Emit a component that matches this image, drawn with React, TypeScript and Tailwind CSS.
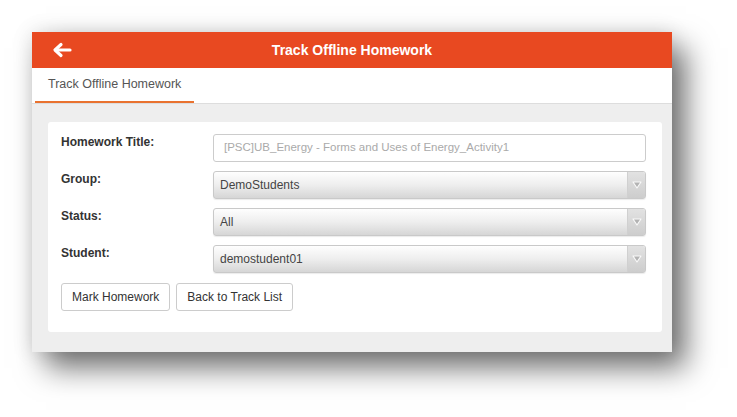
import React from 'react'

const font = { fontFamily: '"Liberation Sans", Arial, Helvetica, sans-serif' }

function BackArrow() {
    return (
        <svg width="20" height="16" viewBox="0 0 20 16" fill="none">
            <path d="M18 8H4" stroke="white" strokeWidth="3.2" strokeLinecap="round" />
            <path d="M9 2.5L3 8l6 5.5" stroke="white" strokeWidth="3.2" strokeLinecap="round" strokeLinejoin="round" />
        </svg>
    )
}

function SelectBox({ value }: { value: string }) {
    return (
        <div className="flex h-[28px] flex-1 items-stretch overflow-hidden rounded-[3px] border border-[#c9c9c9] bg-gradient-to-b from-[#fefefe] via-[#eeeeee] to-[#d6d6d6] shadow-[0_1px_1px_rgba(0,0,0,0.08)]">
            <div className="flex flex-1 items-center pl-[6px] text-[12px] text-[#444]">{value}</div>
            <div className="flex w-[18px] items-center justify-center border-l border-[#d0d0d0] bg-gradient-to-b from-[#e2e2e2] to-[#cdcdcd]">
                <svg width="10" height="8" viewBox="0 0 10 8">
                    <path d="M1 1h8L5 7z" fill="#b3b3b3" stroke="#fafafa" strokeWidth="1.1" strokeLinejoin="round" />
                </svg>
            </div>
        </div>
    )
}

function Row({ label, children }: { label: string; children: React.ReactNode }) {
    return (
        <div className="flex items-start">
            <div className="w-[152px] text-[12px] font-bold leading-[16px] text-[#333]">{label}</div>
            {children}
        </div>
    )
}

export default function App() {
    return (
        <div className="h-[417px] w-[737px] bg-white pl-[32px] pt-[32px]" style={font}>
            <div className="flex h-[320px] w-[640px] flex-col bg-[#eeeeee] shadow-[14px_16px_28px_rgba(0,0,0,0.55),0_0_20px_rgba(0,0,0,0.12)]">
                {/* Header */}
                <div className="flex h-[36px] items-center bg-[#e84921]">
                    <div className="flex w-[70px] items-center pl-[20px]">
                        <BackArrow />
                    </div>
                    <div className="flex-1 text-center text-[14px] font-bold text-white">Track Offline Homework</div>
                    <div className="w-[70px]" />
                </div>

                {/* Tabs */}
                <div className="flex h-[36px] border-b border-[#dddddd] bg-white pl-[3px]">
                    <div className="flex w-[159px] items-center border-b-2 border-[#e9722f] pl-[13px] text-[12.5px] text-[#555]">
                        Track Offline Homework
                    </div>
                </div>

                {/* Content */}
                <div className="flex-1 pl-[16px] pr-[10px] pt-[18px]">
                    <div className="flex flex-col gap-[9px] rounded-[3px] bg-white pb-[21px] pl-[13px] pr-[16px] pt-[12px]">
                        <Row label="Homework Title:">
                            <div className="flex h-[28px] flex-1 items-center rounded-[3px] border border-[#cccccc] bg-white pl-[10px] text-[11.5px] text-[#aaaaaa]">
                                [PSC]UB_Energy - Forms and Uses of Energy_Activity1
                            </div>
                        </Row>
                        <Row label="Group:">
                            <SelectBox value="DemoStudents" />
                        </Row>
                        <Row label="Status:">
                            <SelectBox value="All" />
                        </Row>
                        <Row label="Student:">
                            <SelectBox value="demostudent01" />
                        </Row>
                        <div className="flex gap-[6px] pt-[1px]">
                            <button className="h-[28px] rounded-[3px] border border-[#cccccc] bg-white px-[10px] text-[12px] text-[#333]">
                                Mark Homework
                            </button>
                            <button className="h-[28px] rounded-[3px] border border-[#cccccc] bg-white px-[10px] text-[12px] text-[#333]">
                                Back to Track List
                            </button>
                        </div>
                    </div>
                </div>
            </div>
        </div>
    )
}
